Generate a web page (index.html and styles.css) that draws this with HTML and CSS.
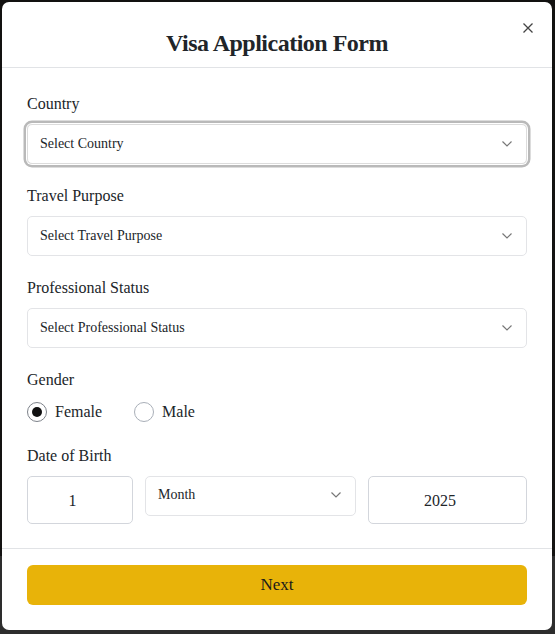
FILE: index.html
```html
<!DOCTYPE html>
<html lang="en">
<head>
<meta charset="utf-8">
<title>Visa Application Form</title>
<link rel="stylesheet" href="styles.css">
</head>
<body>
<div class="modal">
  <div class="modal-header">
    <h1 class="title">Visa Application Form</h1>
    <button class="close" aria-label="Close">
      <svg width="12" height="12" viewBox="0 0 12 12"><path d="M1.5 1.5L10.5 10.5M10.5 1.5L1.5 10.5" stroke="#444" stroke-width="1.3" fill="none"/></svg>
    </button>
  </div>
  <div class="modal-body">
    <div class="group">
      <div class="label">Country</div>
      <div class="select focused"><span>Select Country</span><svg class="chev" width="10" height="6" viewBox="0 0 10 6"><path d="M0.5 0.5L5 5L9.5 0.5" stroke="#777" stroke-width="1.2" fill="none"/></svg></div>
    </div>
    <div class="group">
      <div class="label">Travel Purpose</div>
      <div class="select"><span>Select Travel Purpose</span><svg class="chev" width="10" height="6" viewBox="0 0 10 6"><path d="M0.5 0.5L5 5L9.5 0.5" stroke="#777" stroke-width="1.2" fill="none"/></svg></div>
    </div>
    <div class="group">
      <div class="label">Professional Status</div>
      <div class="select"><span>Select Professional Status</span><svg class="chev" width="10" height="6" viewBox="0 0 10 6"><path d="M0.5 0.5L5 5L9.5 0.5" stroke="#777" stroke-width="1.2" fill="none"/></svg></div>
    </div>
    <div class="group">
      <div class="label">Gender</div>
      <div class="radios">
        <div class="radio-opt"><span class="radio checked"></span><span>Female</span></div>
        <div class="radio-opt"><span class="radio"></span><span>Male</span></div>
      </div>
    </div>
    <div class="group">
      <div class="label">Date of Birth</div>
      <div class="dob">
        <div class="num">1</div>
        <div class="select month"><span>Month</span><svg class="chev" width="10" height="6" viewBox="0 0 10 6"><path d="M0.5 0.5L5 5L9.5 0.5" stroke="#777" stroke-width="1.2" fill="none"/></svg></div>
        <div class="num">2025</div>
      </div>
    </div>
  </div>
  <div class="modal-footer">
    <button class="next">Next</button>
  </div>
</div>
</body>
</html>
```
FILE: styles.css
```css
* { box-sizing: border-box; }
html, body { margin: 0; padding: 0; }
body {
  width: 555px;
  height: 634px;
  overflow: hidden;
  background: linear-gradient(to bottom, #121110 0, #141312 556px, #2d2d2d 556px, #2d2d2d 100%);
  font-family: "Liberation Serif", "Times New Roman", serif;
  color: #212529;
  padding: 2px 3px 0 2px;
}
.modal {
  width: 550px;
  background: #fff;
  border-radius: 7px;
  display: flex;
  flex-direction: column;
}
.modal-header {
  position: relative;
  padding: 26px 0 9px;
  border-bottom: 1px solid #e1e3e6;
  text-align: center;
}
.title {
  margin: 0;
  font-size: 24px;
  line-height: 30px;
  font-weight: bold;
  letter-spacing: -0.5px;
  color: #212529;
}
.close {
  position: absolute;
  top: 19px;
  right: 17px;
  width: 14px;
  height: 14px;
  padding: 0;
  border: 0;
  background: none;
  display: flex;
  align-items: center;
  justify-content: center;
}
.modal-body {
  padding: 24px 25px 24px;
  display: flex;
  flex-direction: column;
  gap: 20px;
}
.group {
  display: flex;
  flex-direction: column;
  gap: 8px;
}
.label {
  font-size: 16px;
  line-height: 24px;
}
.select {
  height: 40px;
  border: 1px solid #e3e4e7;
  border-radius: 5px;
  padding: 0 14px 0 12px;
  display: flex;
  align-items: center;
  justify-content: space-between;
  font-size: 14px;
  color: #212529;
}
.select.focused {
  box-shadow: 0 0 0 1px #fff, 0 0 0 3.5px #b9b9b9;
  border-color: #dcdcdc;
}
.chev { flex: none; }
.radios {
  display: flex;
  gap: 32px;
  height: 24px;
  align-items: center;
}
.radio-opt {
  display: flex;
  align-items: center;
  gap: 8px;
  font-size: 16px;
}
.radio {
  width: 20px;
  height: 20px;
  border-radius: 50%;
  border: 1px solid #a9afb8;
  display: flex;
  align-items: center;
  justify-content: center;
}
.radio.checked {
  border-color: #7d828a;
}
.radio.checked::after {
  content: "";
  width: 10px;
  height: 10px;
  border-radius: 50%;
  background: #111;
}
.dob {
  display: grid;
  grid-template-columns: 106px 211px 1fr;
  gap: 12px;
  align-items: start;
}
.num {
  height: 48px;
  border: 1px solid #d3d6dc;
  border-radius: 5px;
  display: flex;
  align-items: center;
  justify-content: center;
  font-size: 16px;
  padding: 1px 15px 0 0;
}
.select.month {
  padding-bottom: 2px;
  align-items: center;
}
.select.month span { align-self: center; margin-top: -1px; }
.modal-footer {
  border-top: 1px solid #e1e3e6;
  padding: 16px 25px 25px;
}
.next {
  width: 100%;
  height: 40px;
  border: 0;
  border-radius: 6px;
  background: #e8b309;
  font-family: "Liberation Serif", "Times New Roman", serif;
  font-size: 17px;
  color: #1a1a1a;
}
```
